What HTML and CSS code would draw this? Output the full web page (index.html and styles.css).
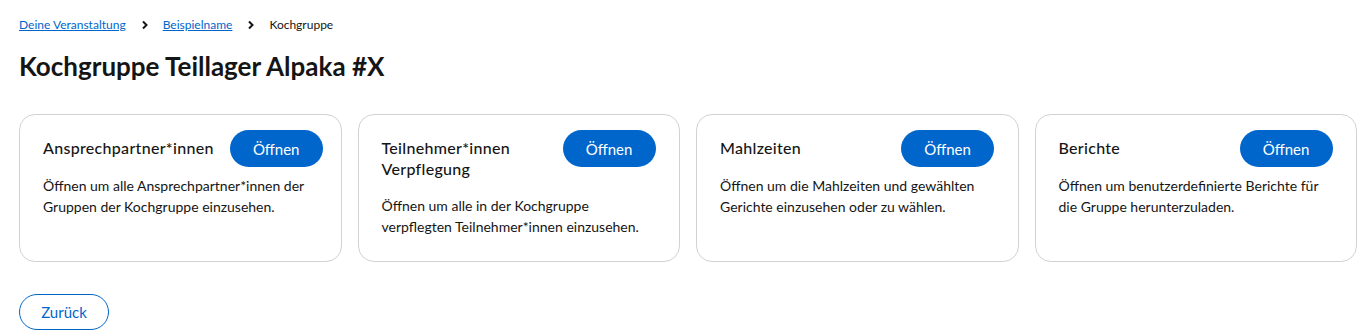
FILE: index.html
```html
<!DOCTYPE html>
<html lang="de">
<head>
  <meta charset="UTF-8"/>
  <meta name="viewport" content="width=device-width, initial-scale=1.0"/>
  <title>Kochgruppe Teillager Alpaka #X</title>
  <link rel="stylesheet" href="styles.css">
</head>
<body>
  <div class="page">
    <!-- Breadcrumb -->
    <nav class="breadcrumb">
      <a href="#">Deine Veranstaltung</a>
      <span class="sep"><svg width="8" height="10" viewBox="0 0 8 10"><path d="M2 1.5 L5.5 5 L2 8.5" fill="none" stroke="#151515" stroke-width="2"/></svg></span>
      <a href="#">Beispielname</a>
      <span class="sep"><svg width="8" height="10" viewBox="0 0 8 10"><path d="M2 1.5 L5.5 5 L2 8.5" fill="none" stroke="#151515" stroke-width="2"/></svg></span>
      <span class="current">Kochgruppe</span>
    </nav>

    <h1>Kochgruppe Teillager Alpaka #X</h1>

    <!-- Karten -->
    <div class="cards">
      <div class="card">
        <div class="card-head">
          <h2>Ansprechpartner*innen</h2>
          <button class="btn primary">Öffnen</button>
        </div>
        <p>Öffnen um alle Ansprechpartner*innen der Gruppen der Kochgruppe einzusehen.</p>
      </div>
      <div class="card">
        <div class="card-head">
          <h2>Teilnehmer*innen Verpflegung</h2>
          <button class="btn primary">Öffnen</button>
        </div>
        <p>Öffnen um alle in der Kochgruppe verpflegten Teilnehmer*innen einzusehen.</p>
      </div>
      <div class="card">
        <div class="card-head">
          <h2>Mahlzeiten</h2>
          <button class="btn primary">Öffnen</button>
        </div>
        <p>Öffnen um die Mahlzeiten und gewählten Gerichte einzusehen oder zu wählen.</p>
      </div>
      <div class="card">
        <div class="card-head">
          <h2>Berichte</h2>
          <button class="btn primary">Öffnen</button>
        </div>
        <p>Öffnen um benutzerdefinierte Berichte für die Gruppe herunterzuladen.</p>
      </div>
    </div>

    <button class="btn secondary">Zurück</button>
  </div>
</body>
</html>
```

FILE: styles.css
```css
body {
  font-family: Lato, "Open Sans", sans-serif;
  color: #151515;
  background: #fff;
  margin: 0;
}

.page {
  padding: 16px 10px 0 19px;
}

.breadcrumb {
  display: flex;
  align-items: center;
  font-size: 12px;
  line-height: 18px;
}
.breadcrumb a {
  color: #0066cc;
  text-decoration: underline;
}
.breadcrumb .sep {
  display: flex;
  margin: 0 14px 0 15px;
}

h1 {
  font-size: 26px;
  font-weight: 700;
  margin: 16px 0 0;
  line-height: 32px;
}

.cards {
  display: grid;
  grid-template-columns: repeat(4, minmax(0, 1fr));
  gap: 16px;
  margin-top: 32px;
}
.card {
  border: 1px solid #d2d2d2;
  border-radius: 16px;
  padding: 15px 18px 24px 23px;
  min-height: 148px;
  box-sizing: border-box;
}
.card-head {
  display: flex;
  align-items: flex-start;
  gap: 16px;
}
.card h2 {
  flex: 0 0 auto;
  width: 165px;
  min-width: min-content;
  margin: 7px 0 8px;
  font-size: 16px;
  font-weight: 500;
  line-height: 21px;
  letter-spacing: 0.3px;
}
.card p {
  margin: 8px 0 0;
  font-size: 14px;
  line-height: 21px;
}

.btn {
  font-family: inherit;
  font-size: 15px;
  border-radius: 999px;
  height: 37px;
  cursor: pointer;
  flex-shrink: 0;
}
.btn.primary {
  width: 93px;
  background: #0066cc;
  color: #fff;
  border: none;
}
.btn.secondary {
  margin-top: 32px;
  width: 90px;
  height: 36px;
  background: #fff;
  color: #0066cc;
  border: 1px solid #0066cc;
}
```
